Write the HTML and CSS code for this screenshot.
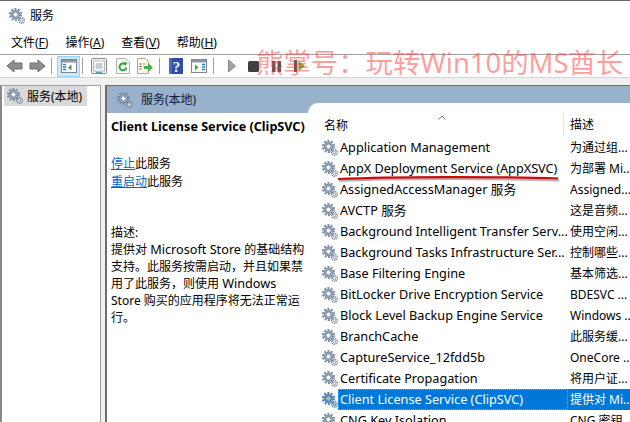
FILE: index.html
```html
<!DOCTYPE html>
<html lang="zh">
<head>
<meta charset="utf-8">
<title>服务</title>
<link rel="stylesheet" href="styles.css">
</head>
<body>
<svg class="defs" width="0" height="0">
  <defs>
    <symbol id="gear" viewBox="0 0 16 16">
      <circle cx="6.5" cy="6.5" r="5.6" fill="none" stroke="#7f90a8" stroke-width="2" stroke-dasharray="2 1.52"/>
      <circle cx="6.5" cy="6.5" r="4.3" fill="#9fb2c9" stroke="#64768f" stroke-width=".8"/>
      <circle cx="6.5" cy="6.5" r="2.6" fill="#f4f8fc" stroke="#5f7188" stroke-width=".8"/>
      <circle cx="12.4" cy="12.4" r="2.9" fill="none" stroke="#6f7a89" stroke-width="1.3" stroke-dasharray="1.2 .8"/>
      <circle cx="12.4" cy="12.4" r="1.9" fill="#a9b4c2"/>
      <circle cx="12.4" cy="12.4" r=".8" fill="#fff"/>
    </symbol>
  </defs>
</svg>
<div class="window">
  <div class="titlebar"><svg class="gear"><use href="#gear"/></svg><span>服务</span></div>
  <div class="menubar">
    <span>文件(<u>F</u>)</span>
    <span>操作(<u>A</u>)</span>
    <span>查看(<u>V</u>)</span>
    <span>帮助(<u>H</u>)</span>
  </div>
  <div class="toolbar">
    <svg class="tool t-back" viewBox="0 0 17 14"><path d="M1 7 8 1v3h8v6H8v3z" fill="#8d8d8d" stroke="#6e6e6e"/></svg>
    <svg class="tool t-next" viewBox="0 0 17 14"><path d="M16 7 9 1v3H1v6h8v3z" fill="#8d8d8d" stroke="#6e6e6e"/></svg>
    <i class="sep s-1"></i>
    <span class="tool-on"><svg class="tool" viewBox="0 0 16 14"><rect x=".5" y=".5" width="15" height="13" fill="#fff" stroke="#7b8792"/><rect x="1" y="1" width="14" height="2.5" fill="#8b98a5"/><path d="M10.5 5.500v6L7 8.500z" fill="#39a642"/><path d="M2 5.500h3M2 8h3M2 10.500h3" stroke="#2f7fc4" stroke-width="1.500"/></svg></span>
    <i class="sep s-2"></i>
    <svg class="tool t-page" viewBox="0 0 16 16"><rect x=".5" y=".5" width="15" height="15" rx="1" fill="#f3f3f3" stroke="#8a8a8a"/><rect x="2.500" y="3" width="11" height="10" fill="#fff" stroke="#b9b9b9"/><path d="M4.500 6h7M4.500 8h7M4.500 10h7" stroke="#8d9bab"/><path d="M5 14.500h6" stroke="#42a5dc" stroke-width="1.500"/></svg>
    <svg class="tool t-refresh" viewBox="0 0 14 16"><path d="M.5.500h9l4 3.500v11.500H.500z" fill="#f8f8f8" stroke="#b0b0b0"/><path d="M10.300 9.500a3.400 3.400 0 1 1-1.200-3.200" fill="none" stroke="#2fa838" stroke-width="2"/><path d="M7.500 3.500 11.500 5 9 8z" fill="#2fa838"/></svg>
    <svg class="tool t-export" viewBox="0 0 16 16"><path d="M.5.500h8l3 3v12H.500z" fill="#fbf7ea" stroke="#b0a890"/><path d="M2.500 6h2M2.500 8.500h2M2.500 11h2" stroke="#555"/><path d="M5.500 6h3M5.500 8.500h1" stroke="#c8a25a"/><path d="M7 8h4V5l5 4.500L11 14v-3H7z" fill="#48b04a"/></svg>
    <i class="sep s-3"></i>
    <svg class="tool t-help" viewBox="0 0 14 16"><rect width="14" height="16" fill="#2f4fa6"/><rect width="3" height="16" fill="#4e6bc0"/><text x="7.500" y="13.500" class="help-mark">?</text></svg>
    <svg class="tool t-panel" viewBox="0 0 16 14"><rect x=".5" y=".5" width="15" height="13" fill="#fff" stroke="#7b8792"/><rect x="1" y="1" width="14" height="2.500" fill="#8b98a5"/><path d="M4 5.500v6L7.500 8.500z" fill="#39a642"/><path d="M11 5.500h3M11 8h3M11 10.500h3" stroke="#2f7fc4" stroke-width="1.500"/></svg>
    <i class="sep s-4"></i>
    <svg class="tool t-play" viewBox="0 0 8 14"><path d="M.5 1v12L7.500 7z" fill="#a4a4a4" stroke="#8a8a8a"/></svg>
    <svg class="tool t-stop" viewBox="0 0 11 11"><rect width="11" height="11" rx="1.500" fill="#404040"/></svg>
    <svg class="tool t-pause" viewBox="0 0 9 11"><rect width="3.500" height="11" fill="#555"/><rect x="5.500" width="3.500" height="11" fill="#555"/></svg>
    <svg class="tool t-resume" viewBox="0 0 11 12"><rect width="3" height="12" fill="#555"/><path d="M4.500 1v10L11 6z" fill="#6fb33c"/></svg>
  </div>
  <div class="strip"></div>
  <div class="content">
    <aside class="tree">
      <div class="tree-item"><svg class="gear"><use href="#gear"/></svg><span>服务(本地)</span></div>
    </aside>
    <main class="main">
      <header class="band"><svg class="gear"><use href="#gear"/></svg><span>服务(本地)</span></header>
      <div class="panes">
        <section class="info">
          <h1>Client License Service (ClipSVC)</h1>
          <p class="actions"><a>停止</a>此服务<br><a>重启动</a>此服务</p>
          <p class="desc">描述:<br>提供对 <span class="latin">Microsoft Store</span> 的基础结构<br>支持。此服务按需启动，并且如果禁<br>用了此服务，则使用 <span class="latin">Windows</span><br>Store 购买的应用程序将无法正常运<br>行。</p>
        </section>
        <section class="list">
          <div class="head"><svg class="sort" viewBox="0 0 8 5"><path d="M.5 4.500 4 1l3.500 3.500" fill="none" stroke="#777"/></svg><span class="col-name">名称</span><span class="col-desc">描述</span></div>
          <div class="row"><svg class="gear"><use href="#gear"/></svg><span class="name">Application Management</span><span class="text">为通过组...</span></div>
          <div class="row"><svg class="gear"><use href="#gear"/></svg><span class="name">AppX Deployment Service (AppXSVC)</span><span class="text">为部署 Mi...</span></div>
          <div class="row"><svg class="gear"><use href="#gear"/></svg><span class="name">AssignedAccessManager 服务</span><span class="text">Assigned...</span></div>
          <div class="row"><svg class="gear"><use href="#gear"/></svg><span class="name">AVCTP 服务</span><span class="text">这是音频...</span></div>
          <div class="row"><svg class="gear"><use href="#gear"/></svg><span class="name">Background Intelligent Transfer Serv...</span><span class="text">使用空闲...</span></div>
          <div class="row"><svg class="gear"><use href="#gear"/></svg><span class="name">Background Tasks Infrastructure Ser...</span><span class="text">控制哪些...</span></div>
          <div class="row"><svg class="gear"><use href="#gear"/></svg><span class="name">Base Filtering Engine</span><span class="text">基本筛选...</span></div>
          <div class="row"><svg class="gear"><use href="#gear"/></svg><span class="name">BitLocker Drive Encryption Service</span><span class="text">BDESVC ...</span></div>
          <div class="row"><svg class="gear"><use href="#gear"/></svg><span class="name">Block Level Backup Engine Service</span><span class="text">Windows ...</span></div>
          <div class="row"><svg class="gear"><use href="#gear"/></svg><span class="name">BranchCache</span><span class="text">此服务缓...</span></div>
          <div class="row"><svg class="gear"><use href="#gear"/></svg><span class="name">CaptureService_12fdd5b</span><span class="text">OneCore ...</span></div>
          <div class="row"><svg class="gear"><use href="#gear"/></svg><span class="name">Certificate Propagation</span><span class="text">将用户证...</span></div>
          <div class="row selected"><svg class="gear"><use href="#gear"/></svg><span class="name">Client License Service (ClipSVC)</span><span class="text">提供对 Mi...</span></div>
          <div class="row"><svg class="gear"><use href="#gear"/></svg><span class="name">CNG Key Isolation</span><span class="text">CNG 密钥...</span></div>
        </section>
      </div>
    </main>
  </div>
  <svg class="redline" viewBox="0 0 226 10"><path d="M2 6C60 3.500 160 3.500 222 5.500" fill="none" stroke="#777" stroke-opacity=".55" stroke-width="2" transform="translate(1 2)"/><path d="M2 6C60 3.500 160 3.500 222 5.500" fill="none" stroke="#c80a0a" stroke-width="2.200"/></svg>
  <div class="watermark">熊掌号：玩转Win10的MS酋长</div>
</div>
</body>
</html>
```

FILE: styles.css
```css
html, body { margin: 0; padding: 0; }
body { width: 630px; height: 422px; overflow: hidden; background: #fff; }
.defs { position: absolute; }
.window {
  position: relative;
  width: 630px; height: 422px; overflow: hidden;
  box-sizing: border-box;
  border-top: 1px solid #6a6a6a;
  display: flex; flex-direction: column;
  font: 12px/17px "Noto Sans", "Noto Sans CJK SC", sans-serif;
  color: #000;
  background: #fff;
}
.gear { width: 16px; height: 16px; flex: none; }
.titlebar {
  height: 29px; flex: none;
  display: flex; align-items: center; gap: 5px;
  padding-left: 9px;
}
.menubar {
  height: 24px; flex: none;
  display: flex; align-items: center; gap: 17px;
  padding-left: 11px;
}
.toolbar {
  height: 22px; flex: none;
  display: flex; align-items: center;
  padding-left: 6px;
  border-top: 1px solid #a0a0a0;
  border-bottom: 1px solid #d5d5d5;
  background: #fff;
}
.tool { display: block; flex: none; }
.sep { width: 1px; height: 16px; background: #a0a0a0; flex: none; }
.s-1 { margin-left: 5px; }
.s-2 { margin-left: 2px; }
.s-3, .s-4 { margin-left: 6px; }
.tool-on {
  width: 23px; height: 21px; flex: none; margin-left: 5px;
  box-sizing: border-box;
  display: flex; align-items: center; justify-content: center;
  background: #cce8ff; border: 1px solid #99d1ff;
}
.tool-on .tool { width: 16px; height: 14px; }
.t-back { width: 17px; height: 14px; }
.t-next { width: 17px; height: 14px; margin-left: 6px; }
.t-page { width: 16px; height: 16px; margin-left: 8px; }
.t-refresh { width: 14px; height: 16px; margin-left: 9px; }
.t-export { width: 16px; height: 16px; margin-left: 7px; }
.t-help { width: 14px; height: 16px; margin-left: 9px; }
.help-mark { font: bold 15px "Liberation Serif", serif; fill: #fff; text-anchor: middle; }
.t-panel { width: 16px; height: 14px; margin-left: 8px; }
.t-play { width: 8px; height: 14px; margin-left: 14px; }
.t-stop { width: 11px; height: 11px; margin-left: 12px; }
.t-pause { width: 9px; height: 11px; margin-left: 13px; }
.t-resume { width: 11px; height: 12px; margin-left: 13px; }
.strip { height: 7px; flex: none; background: #f0f0f0; }
.content { flex: 1; display: flex; min-height: 0; background: #f0f0f0; }
.tree {
  width: 98px; flex: none;
  background: #fff;
  border-left: 2px solid #8a8a8a;
  border-top: 1px solid #a0a0a0;
  border-right: 1px solid #a0a0a0;
}
.tree-item {
  display: flex; align-items: center; gap: 4px;
  margin-left: 2px; padding-left: 3px;
  height: 20px; width: 80px;
  background: #d9d9d9;
  white-space: nowrap;
}
.main {
  flex: 1; margin-left: 4px; min-width: 0;
  border-left: 2px solid #6e6e6e;
  border-top: 1px solid #6e6e6e;
  background: #fff;
  display: flex; flex-direction: column;
}
.band {
  height: 27px; flex: none;
  background: #98b2ce;
  display: flex; align-items: center; gap: 8px;
  padding-left: 10px;
  box-sizing: border-box;
}
.band span { color: #10203a; }
.panes { flex: 1; display: flex; min-height: 0; }
.info { width: 197px; flex: none; padding: 5px 0 0 4px; white-space: nowrap; }
.info h1 { margin: 0; font-size: 12.6px; line-height: 17px; font-weight: 700; }
.actions { margin: 20px 0 0; line-height: 18px; }
.actions a { color: #0066cc; text-decoration: underline; }
.desc { margin: 33px 0 0; line-height: 17px; }
.latin { font-size: 12.7px; }
.list {
  flex: 1; min-width: 0;
  margin-top: -10px;
  background: #fff;
  border-top-left-radius: 10px;
  position: relative;
}
.head {
  height: 34px; position: relative;
  display: flex; align-items: flex-end;
  box-sizing: border-box;
}
.sort { position: absolute; left: 130px; top: 12px; width: 8px; height: 5px; }
.col-name { width: 255px; padding-left: 16px; box-sizing: border-box; line-height: 21px; margin-bottom: 1px; }
.col-desc { padding-left: 6px; line-height: 23px; border-left: 1px solid #e3e3e3; height: 24px; box-sizing: border-box; }
.row {
  height: 21px; display: flex; align-items: center;
  padding-left: 14px; white-space: nowrap;
  position: relative;
}
.row .name { width: 230px; flex: none; padding-left: 2px; box-sizing: border-box; line-height: 21px; font-size: 12.7px; }
.row .text { flex: 1; padding-left: 2px; overflow: hidden; }
.selected .name, .selected .text { background: #0078d7; color: #fff; }
.selected .name { outline: 1px dotted #e58a2a; outline-offset: -1px; }
.selected .text { align-self: stretch; line-height: 21px; }
.selected .gear { filter: sepia(1) hue-rotate(175deg) saturate(3) brightness(.72); }
.redline { position: absolute; left: 336px; top: 172px; width: 226px; height: 10px; }
.watermark {
  position: absolute; left: 256px; top: 44px;
  font: 400 27.4px/36px "Noto Sans", "Noto Sans CJK SC", sans-serif;
  color: rgba(255, 60, 60, .5);
  white-space: nowrap;
}
```
